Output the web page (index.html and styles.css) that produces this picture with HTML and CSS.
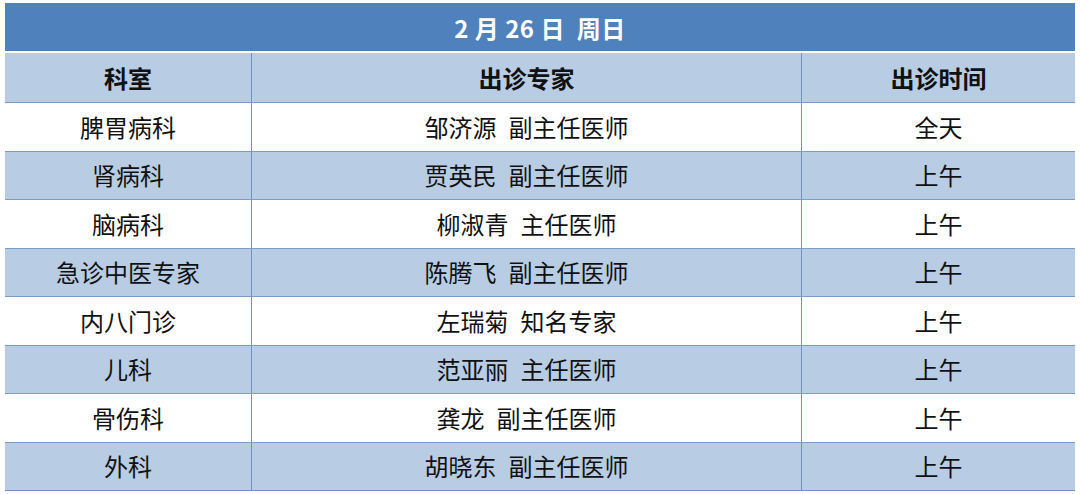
FILE: index.html
```html
<!DOCTYPE html>
<html lang="zh">
<head>
<meta charset="utf-8">
<link rel="stylesheet" href="styles.css">
</head>
<body>
<div class="sheet">
  <div class="title">2 月 26 日&nbsp; 周日</div>
  <div class="row head">
    <div class="cell">科室</div>
    <div class="cell">出诊专家</div>
    <div class="cell">出诊时间</div>
  </div>
  <div class="row odd">
    <div class="cell">脾胃病科</div>
    <div class="cell">邹济源<span class="sp"></span>副主任医师</div>
    <div class="cell">全天</div>
  </div>
  <div class="row even">
    <div class="cell">肾病科</div>
    <div class="cell">贾英民<span class="sp"></span>副主任医师</div>
    <div class="cell">上午</div>
  </div>
  <div class="row odd">
    <div class="cell">脑病科</div>
    <div class="cell">柳淑青<span class="sp"></span>主任医师</div>
    <div class="cell">上午</div>
  </div>
  <div class="row even">
    <div class="cell">急诊中医专家</div>
    <div class="cell">陈腾飞<span class="sp"></span>副主任医师</div>
    <div class="cell">上午</div>
  </div>
  <div class="row odd">
    <div class="cell">内八门诊</div>
    <div class="cell">左瑞菊<span class="sp"></span>知名专家</div>
    <div class="cell">上午</div>
  </div>
  <div class="row even">
    <div class="cell">儿科</div>
    <div class="cell">范亚丽<span class="sp"></span>主任医师</div>
    <div class="cell">上午</div>
  </div>
  <div class="row odd">
    <div class="cell">骨伤科</div>
    <div class="cell">龚龙<span class="sp"></span>副主任医师</div>
    <div class="cell">上午</div>
  </div>
  <div class="row even">
    <div class="cell">外科</div>
    <div class="cell">胡晓东<span class="sp"></span>副主任医师</div>
    <div class="cell">上午</div>
  </div>
</div>
</body>
</html>
```
FILE: styles.css
```css
html, body {
  margin: 0;
  padding: 0;
  background: #ffffff;
}
body {
  font-family: "Noto Sans CJK SC", "Noto Sans", sans-serif;
  color: #111111;
}
.sheet {
  margin: 3px 0 0 5px;
  width: 1070px;
  display: flex;
  flex-direction: column;
  border-bottom: 1px solid #6f92c2;
}
.title {
  height: 48px;
  background: #4f81bd;
  color: #ffffff;
  font-weight: 700;
  font-size: 24px;
  display: flex;
  align-items: center;
  justify-content: center;
  border-bottom: 2px solid #ffffff;
  letter-spacing: 0.5px;
}
.row {
  display: grid;
  grid-template-columns: 246px 550px 274px;
  height: 48.5px;
  box-sizing: border-box;
  border-top: 1px solid #7a9cc8;
}
.row.head {
  height: 49px;
  border-top: none;
  background: #b8cce4;
  font-weight: 700;
}
.row.odd { background: #ffffff; }
.row.even { background: #b8cce4; }
.cell {
  display: flex;
  align-items: center;
  justify-content: center;
  font-size: 24px;
  border-left: 1px solid #6f92c2;
  padding-bottom: 1px;
}
.cell:first-child { border-left: none; }
.sp {
  display: inline-block;
  width: 12px;
}
```
